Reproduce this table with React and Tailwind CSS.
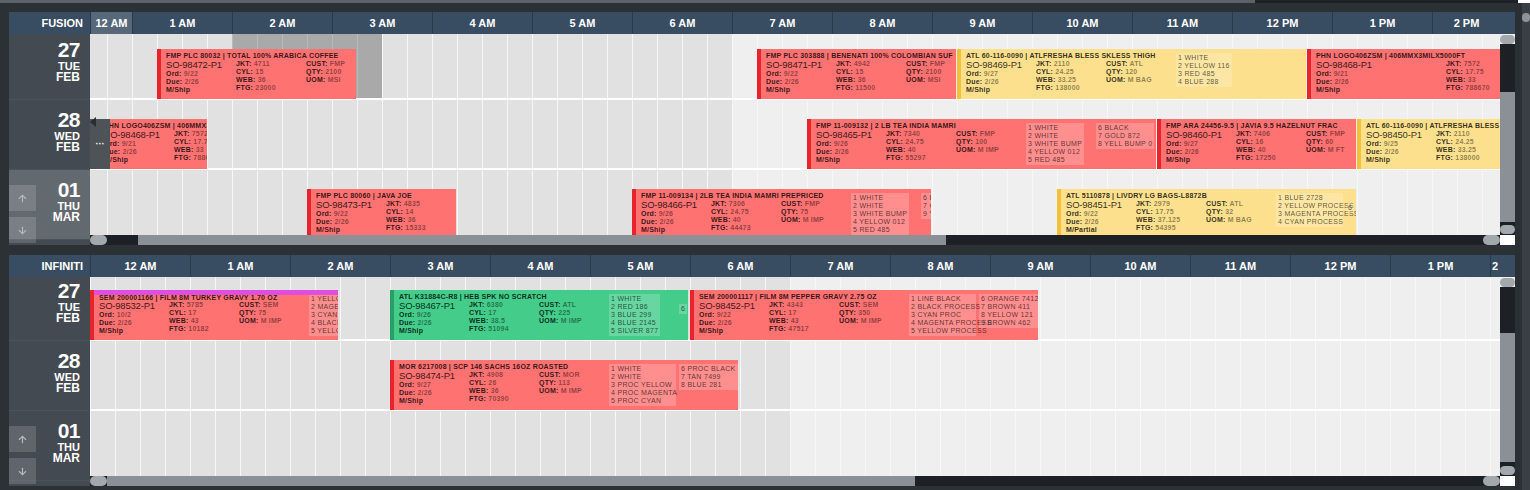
import React from 'react';
import { ArrowUp, ArrowDown } from 'lucide-react';

const SANS = "font-['Liberation_Sans',Arial,sans-serif]";
const NARROW = "font-['Liberation_Sans_Narrow','Arial_Narrow','Liberation_Sans',sans-serif]";

const PAL = {
  r: 'bg-[#ff7272] border-[#e8232b]',
  y: 'bg-[#fde08e] border-[#f2c135]',
  g: 'bg-[#43cc8a] border-[#2a9f63]',
};

const E = (t, w, c, title, so, ord, jkt, cyl, web, ftg, cust, qty, uom, extra = {}) => ({
  t, w, c, title, so, ord, jkt, cyl, web, ftg, cust, qty, uom, ...extra,
});

const DATES = [
  ['27', 'TUE', 'FEB'],
  ['28', 'WED', 'FEB'],
  ['01', 'THU', 'MAR'],
];

const HOURS = ['12 AM', '1 AM', '2 AM', '3 AM', '4 AM', '5 AM', '6 AM', '7 AM', '8 AM', '9 AM', '10 AM', '11 AM', '12 PM', '1 PM', '2 PM'];

const PANELS = [
  {
    name: 'FUSION',
    scrollX: 58,
    scrollY: 4,
    rowsH: 201,
    lightLast: true,
    header: [
      { l: '12 AM', w: 42, hl: true },
      ...HOURS.slice(1, 14).map((l) => ({ l, w: 100 })),
      { l: '2 PM', w: 68 },
    ],
    vs: { top: 58, h: 130 },
    hs: { pre: 31 },
    rows: [
      {
        gray: [200, 150],
        events: [
          E(125, 199, 'r', 'FMP PLC 80032 | TOTAL 100% ARABICA COFFEE', 'SO-98472-P1', '9/22', '4711', '15', '36', '23000', 'FMP', '2100', 'MSI'),
          E(725, 199, 'r', 'FMP PLC 303888 | BENENATI 100% COLOMBIAN SUF', 'SO-98471-P1', '9/22', '4942', '15', '36', '11500', 'FMP', '2100', 'MSI'),
          E(925, 349, 'y', 'ATL 60-116-0090 | ATLFRESHA BLESS SKLESS THIGH', 'SO-98469-P1', '9/27', '2110', '24.25', '33.25', '138000', 'ATL', '120', 'M BAG', {
            colors: [['1 WHITE', '2 YELLOW 116', '3 RED 485', '4 BLUE 288']],
          }),
          E(1275, 400, 'r', 'PHN LOGO406ZSM | 406MMX3MILX5000FT', 'SO-98468-P1', '9/21', '7572', '17.75', '33', '788670', '', '', '', { col1: 130, noCust: true }),
        ],
      },
      {
        more: true,
        events: [
          E(63, 112, 'r', 'PHN LOGO406ZSM | 406MMX3MILX5000FT', 'SO-98468-P1', '9/21', '7572', '17.75', '33', '788670', '', '', '', { noCust: true }),
          E(775, 349, 'r', 'FMP 11-009132 | 2 LB TEA INDIA MAMRI', 'SO-98465-P1', '9/26', '7340', '24.75', '40', '55297', 'FMP', '100', 'M IMP', {
            colors: [
              ['1 WHITE', '2 WHITE', '3 WHITE BUMP', '4 YELLOW 012', '5 RED 485'],
              ['6 BLACK', '7 GOLD 872', '8 YELL BUMP 0'],
            ],
          }),
          E(1125, 199, 'r', 'FMP ARA 24456-9.5 | JAVIA 9.5 HAZELNUT FRAC', 'SO-98460-P1', '9/27', '7406', '16', '40', '17250', 'FMP', '60', 'M FT'),
          E(1325, 300, 'y', 'ATL 60-116-0090 | ATLFRESHA BLESS SKLESS THIGH', 'SO-98450-P1', '9/25', '2110', '24.25', '33.25', '138000', '', '', '', { noCust: true }),
        ],
      },
      {
        events: [
          E(275, 149, 'r', 'FMP PLC 80060 | JAVA JOE', 'SO-98473-P1', '9/22', '4835', '14', '36', '15333', '', '', '', { noCust: true }),
          E(600, 299, 'r', 'FMP 11-009134 | 2LB TEA INDIA MAMRI PREPRICED', 'SO-98466-P1', '9/26', '7306', '24.75', '40', '44473', 'FMP', '75', 'M IMP', {
            colors: [
              ['1 WHITE', '2 WHITE', '3 WHITE BUMP', '4 YELLOW 012', '5 RED 485'],
              ['6 BLACK', '7 GOLD 872', '9 YELL BUMP 0'],
            ],
          }),
          E(1025, 299, 'y', 'ATL 5110878 | LIVDRY LG BAGS-L8872B', 'SO-98451-P1', '9/22', '2979', '17.75', '37.125', '54395', 'ATL', '32', 'M BAG', {
            ship: 'M/Partial',
            colors: [['1 BLUE 2728', '2 YELLOW PROCESS', '3 MAGENTA PROCESS', '4 CYAN PROCESS'], ['6']],
          }),
        ],
      },
    ],
  },
  {
    name: 'INFINITI',
    scrollX: 0,
    scrollY: 6,
    rowsH: 199,
    lightLast: false,
    header: [...HOURS.slice(0, 14).map((l) => ({ l, w: 100 })), { l: '2 PM', w: 10, left: true }],
    vs: { top: 56, h: 129 },
    hs: { pre: 0 },
    rows: [
      {
        events: [
          E(0, 248, 'r', 'SEM 200001166 | FILM 8M TURKEY GRAVY 1.70 OZ', 'SO-98532-P1', '10/2', '5785', '17', '43', '10182', 'SEM', '75', 'M IMP', {
            bar: true,
            colors: [['1 YELLOW', '2 MAGENTA', '3 CYAN', '4 BLACK', '5 YELLOW']],
          }),
          E(300, 298, 'g', 'ATL K31884C-R8 | HEB SPK NO SCRATCH', 'SO-98467-P1', '9/26', '6380', '17', '38.5', '51094', 'ATL', '225', 'M IMP', {
            colors: [['1 WHITE', '2 RED 186', '3 BLUE 299', '4 BLUE 2145', '5 SILVER 877'], ['6']],
          }),
          E(600, 348, 'r', 'SEM 200001117 | FILM 8M PEPPER GRAVY 2.75 OZ', 'SO-98452-P1', '9/22', '4343', '17', '43', '47517', 'SEM', '350', 'M IMP', {
            colors: [
              ['1 LINE BLACK', '2 BLACK PROCESS', '3 CYAN PROC', '4 MAGENTA PROCESS', '5 YELLOW PROCESS'],
              ['6 ORANGE 7412', '7 BROWN 411', '8 YELLOW 121', '9 BROWN 462'],
            ],
          }),
        ],
      },
      {
        events: [
          E(300, 348, 'r', 'MOR 6217008 | SCP 146 SACHS 16OZ ROASTED', 'SO-98474-P1', '9/27', '4908', '26', '36', '70390', 'MOR', '113', 'M IMP', {
            colors: [
              ['1 WHITE', '2 WHITE', '3 PROC YELLOW', '4 PROC MAGENTA', '5 PROC CYAN'],
              ['6 PROC BLACK', '7 TAN 7499', '8 BLUE 281'],
            ],
          }),
        ],
      },
      { events: [] },
    ],
  },
];

const CELLS = Array.from({ length: 60 }, (_, i) => i);

function Field({ l, v }) {
  return (
    <div className="whitespace-nowrap text-[7px] leading-[8px] tracking-[0.2px] font-bold">
      <span className="text-black/80">{l}</span>
      {v ? <span className="text-black/45"> {v}</span> : null}
    </div>
  );
}

function Event({ ev }) {
  const col1 = ev.col1 || 70;
  return (
    <div
      className={`absolute top-[19px] h-[50px] flex overflow-hidden border-l-4 ${PAL[ev.c]} ${NARROW}`}
      style={{ left: ev.t, width: ev.w }}
    >
      {ev.bar && <div className="absolute left-0 right-0 top-0 h-[5px] bg-[#e04ee0]" />}
      <div className={`shrink-0 pl-[5px] ${ev.bar ? 'pt-[5px]' : 'pt-[3px]'}`} style={{ width: col1 + 145 }}>
        <div
          className={`whitespace-nowrap text-[7px] font-bold tracking-[0.2px] text-black/80 ${
            ev.bar ? 'leading-[6px]' : 'leading-[8px]'
          }`}
        >
          {ev.title}
        </div>
        <div className="flex">
          <div className="shrink-0" style={{ width: col1 }}>
            <div className="whitespace-nowrap text-[9.5px] leading-[10px] tracking-[-0.2px] text-black/80">{ev.so}</div>
            <Field l="Ord:" v={ev.ord} />
            <Field l="Due:" v="2/26" />
            <Field l={ev.ship || 'M/Ship'} />
          </div>
          <div className="w-[70px] shrink-0">
            <Field l="JKT:" v={ev.jkt} />
            <Field l="CYL:" v={ev.cyl} />
            <Field l="WEB:" v={ev.web} />
            <Field l="FTG:" v={ev.ftg} />
          </div>
          {!ev.noCust && (
            <div className="w-[70px] shrink-0">
              <Field l="CUST:" v={ev.cust} />
              <Field l="QTY:" v={ev.qty} />
              <Field l="UOM:" v={ev.uom} />
            </div>
          )}
        </div>
      </div>
      {ev.colors &&
        ev.colors.map((list, i) => (
          <div key={i} className="w-[70px] shrink-0 pt-[4px]">
            <div className="inline-block max-w-[67px] bg-white/20 px-[2px] py-[1px]">
              {list.map((c) => (
                <div key={c} className="whitespace-nowrap text-[7px] leading-[8px] tracking-[0.3px] text-black/65">
                  {c}
                </div>
              ))}
            </div>
          </div>
        ))}
    </div>
  );
}

function Row({ row, scrollX }) {
  return (
    <div className="relative h-[70px] border-b-2 border-white bg-[linear-gradient(to_right,#e1e1e1_700px,#efefef_700px)]">
      <div className="absolute inset-0 flex">
        {CELLS.map((i) => (
          <div key={i} className="w-[25px] shrink-0 border-l border-[#f7f7f7]" />
        ))}
      </div>
      {row.gray && (
        <div className="absolute top-0 bottom-0 flex bg-[#a9a9a9]" style={{ left: row.gray[0], width: row.gray[1] }}>
          {CELLS.slice(0, 6).map((i) => (
            <div key={i} className="w-[25px] shrink-0 border-l border-[#b9b9b9]" />
          ))}
        </div>
      )}
      {row.events.map((ev) => (
        <Event key={ev.so + ev.t} ev={ev} />
      ))}
      {row.more && (
        <div className="absolute top-[19px] h-[50px] w-[20px] bg-[#4e5358] flex items-center justify-center" style={{ left: scrollX }}>
          <div className="absolute left-0 top-[-2px] w-0 h-0 border-y-[5px] border-y-transparent border-r-[6px] border-r-[#2a2e32]" />
          <span className={`text-white text-[9px] leading-[9px] font-bold ${SANS}`}>···</span>
        </div>
      )}
    </div>
  );
}

function Oval({ w = 'w-[15px]', h = 'h-[9px]' }) {
  return <div className={`${w} ${h} rounded-full bg-[#a3a8ad]`} />;
}

function VScroll({ h, top, thumb }) {
  return (
    <div className="w-[15px] shrink-0 flex flex-col" style={{ height: h }}>
      <div className="h-[10px] bg-[#efefef] flex items-center justify-center">
        <Oval />
      </div>
      <div className="bg-[#1d2125]" style={{ height: top - 10 }} />
      <div className="bg-[#8a9096]" style={{ height: thumb }} />
      <div className="flex-1 bg-[#1d2125] flex items-end justify-center pb-[1px]">
        <Oval />
      </div>
    </div>
  );
}

function HScroll({ pre }) {
  return (
    <div className="h-[10px] flex">
      <div className="w-[1410px] flex bg-[#1d2125]">
        <div className="w-[17px] shrink-0 flex items-center">
          <Oval w="w-[17px]" h="h-[10px]" />
        </div>
        <div className="shrink-0" style={{ width: pre }} />
        <div className="w-[808px] shrink-0 bg-[#8a9096]" />
        <div className="flex-1" />
        <div className="w-[17px] shrink-0 flex items-center">
          <Oval w="w-[17px]" h="h-[10px]" />
        </div>
      </div>
      <div className="w-[15px] bg-white" />
    </div>
  );
}

function Panel({ p }) {
  return (
    <div className="flex flex-col">
      <div className={`h-[22px] flex bg-[#384d62] ${SANS}`}>
        <div className="w-[81px] shrink-0 text-right pr-[7px] text-[11px] leading-[22px] font-bold text-white">{p.name}</div>
        <div className="w-[1410px] flex overflow-hidden">
          {p.header.map((c, i) => (
            <div
              key={c.l + i}
              className={`shrink-0 h-full flex items-center overflow-hidden whitespace-nowrap text-[11px] font-bold text-white border-l border-[#2a3a4b] ${
                c.hl ? 'bg-[#56687a]' : ''
              } ${c.left ? 'justify-start pl-[1px]' : 'justify-center'}`}
              style={{ width: c.w }}
            >
              {c.l}
            </div>
          ))}
        </div>
        <div className="w-[15px] shrink-0" />
      </div>
      <div className="flex">
        <div className={`w-[81px] shrink-0 overflow-hidden bg-[#434a51] ${SANS}`} style={{ height: p.rowsH + 10 }}>
          <div style={{ marginTop: -p.scrollY }}>
            {DATES.map((d, i) => (
              <div
                key={d[0]}
                className={`relative h-[70px] pr-[10px] pt-[9px] text-right text-white font-bold border-b border-[#4b5258] ${
                  p.lightLast && i === 2 ? 'bg-[#62696f]' : ''
                }`}
              >
                <div className="text-[21px] leading-[22px] tracking-[-0.5px]">{d[0]}</div>
                <div className="text-[11px] leading-[11px]">{d[1]}</div>
                <div className="text-[12px] leading-[11px]">{d[2]}</div>
                {i === 2 && (
                  <>
                    <div className="absolute left-0 top-[15px] w-[27px] h-[26px] bg-white/15 flex items-center justify-center">
                      <ArrowUp size={11} strokeWidth={2.5} className="text-[#b4b9be]" />
                    </div>
                    <div className="absolute left-0 top-[47px] w-[27px] h-[26px] bg-white/15 flex items-center justify-center">
                      <ArrowDown size={11} strokeWidth={2.5} className="text-[#b4b9be]" />
                    </div>
                  </>
                )}
              </div>
            ))}
          </div>
        </div>
        <div className="w-[1425px] flex flex-col">
          <div className="flex" style={{ height: p.rowsH }}>
            <div className="w-[1410px] overflow-hidden">
              <div className="w-[1500px]" style={{ marginLeft: -p.scrollX, marginTop: -p.scrollY }}>
                {p.rows.map((r, i) => (
                  <Row key={i} row={r} scrollX={p.scrollX} />
                ))}
              </div>
            </div>
            <VScroll h={p.rowsH} top={p.vs.top} thumb={p.vs.h} />
          </div>
          <HScroll pre={p.hs.pre} />
        </div>
      </div>
    </div>
  );
}

export default function App() {
  return (
    <div className={`w-[1530px] h-[490px] overflow-hidden bg-[#2c3136] ${SANS}`}>
      <div className="h-[3px] flex">
        <div className="w-[1255px] bg-[#5d6268]" />
        <div className="flex-1 bg-[#1d2125]" />
        <div className="w-[12px] bg-white" />
      </div>
      <div className="flex h-[487px]">
        <div className="w-[9px] shrink-0" />
        <div className="w-[1506px] shrink-0 flex flex-col gap-[10px] pt-[9px]">
          {PANELS.map((p) => (
            <Panel key={p.name} p={p} />
          ))}
        </div>
        <div className="w-[15px] shrink-0 flex">
          <div className="w-[7px] bg-[#2a2f34]" />
          <div className="w-[8px] bg-[#3a3f45] flex flex-col items-center pt-[10px]">
            <div className="w-[8px] h-[9px] rounded-full bg-[#8e9398]" />
          </div>
        </div>
      </div>
    </div>
  );
}
